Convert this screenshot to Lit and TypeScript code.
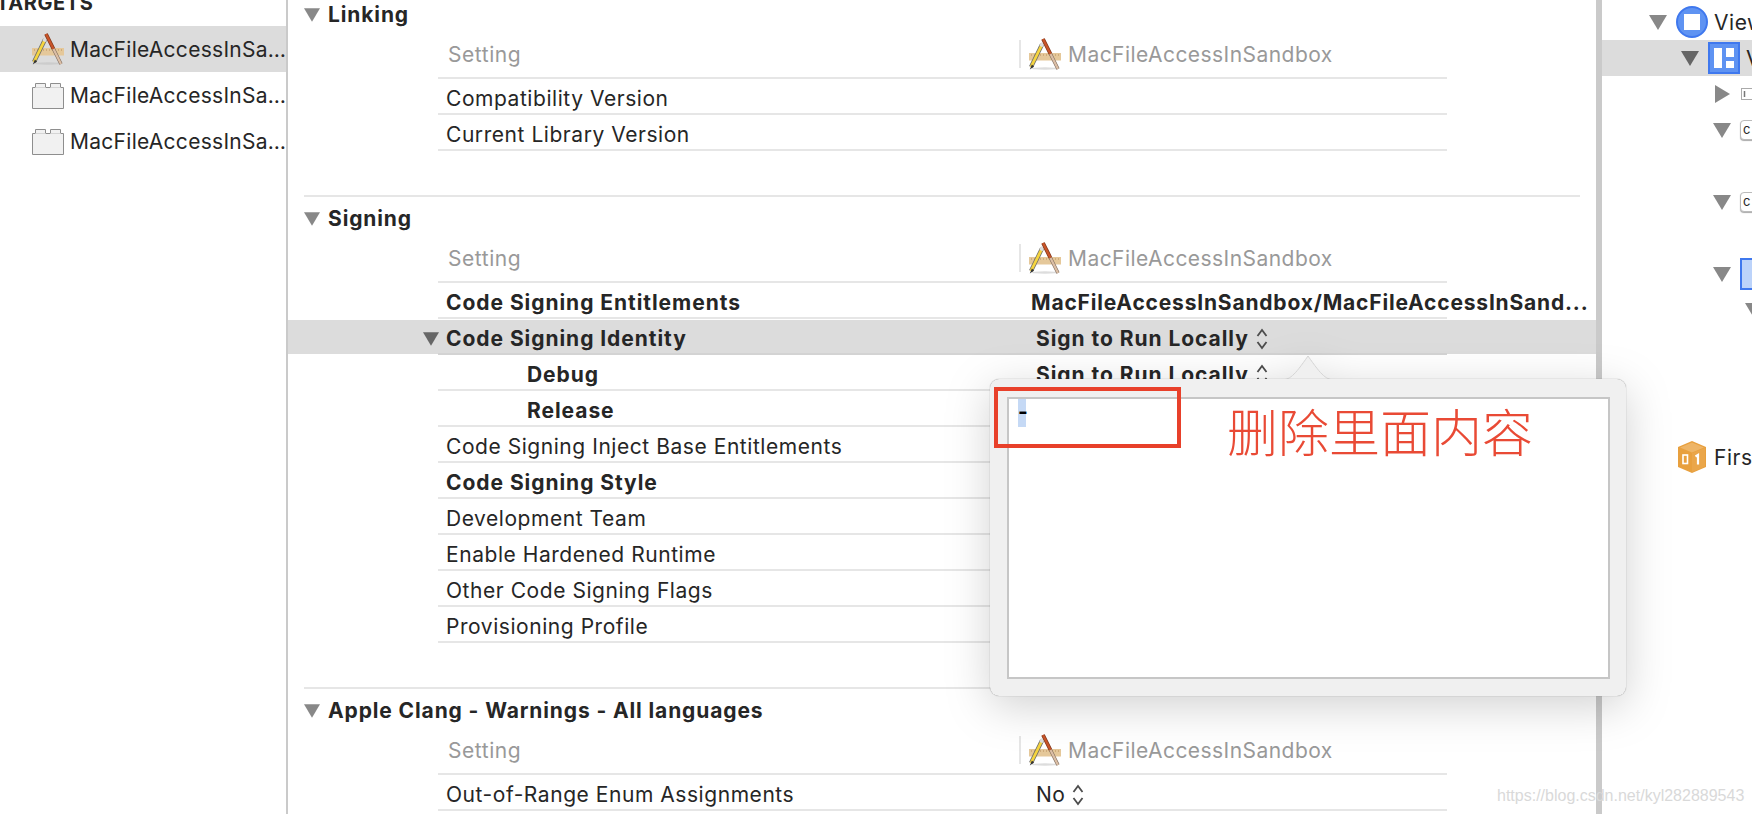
import { LitElement, html, css, nothing } from "lit";
import { customElement } from "lit/decorators.js";

const appIcon = html`<svg class="app" viewBox="0 0 32 32">
  <ellipse cx="16" cy="30.500" rx="14" ry="1.200" fill="#bbb" opacity=".5"/>
  <rect x="0" y="15" width="32" height="7.500" fill="#e5c89a"/>
  <path d="M2 17h28" stroke="#b98f5c" stroke-width="1" stroke-dasharray="1 2"/>
  <path d="M13 6.500 2 29" stroke="#6b6b6b" stroke-width="4.200"/>
  <path d="M13 6.500 2 29" stroke="#f6d53e" stroke-width="2.800"/>
  <path d="M13.600 5 12 8.500" stroke="#ddd" stroke-width="3.200"/>
  <path d="M2.900 26.500 .8 31.500l4.200-3z" fill="#333"/>
  <path d="M14 1 21.500 16" stroke="#7c3418" stroke-width="3.800"/>
  <path d="M14 1 21.500 16" stroke="#c9552a" stroke-width="2.400"/>
  <path d="M21.500 16 29 31" stroke="#7d6a5c" stroke-width="3.400"/>
  <path d="M21.500 16 29 31" stroke="#dcbfa6" stroke-width="2.200"/>
</svg>`;

const brick = html`<svg class="brick" viewBox="0 0 32 27">
  <path d="M.5 26.500V5.500h3V1.500h10v4h5V1.500h10v4h3v21z" fill="#f1f1f1" stroke="#8e8e8e"/>
  <path d="M3.500 5.500h10M18.500 5.500h10" stroke="#d5d5d5"/>
</svg>`;

const stepper = html`<svg class="stepper" viewBox="0 0 14 24"><path d="M2.500 9 7 3l4.500 6M2.500 15 7 21l4.500-6" fill="none" stroke="#4d4d4d" stroke-width="1.800"/></svg>`;

const tri = html`<svg class="tri" viewBox="0 0 18 15"><path d="M0 0h18L9 15z"/></svg>`;
const triR = html`<svg class="tri-right" viewBox="0 0 15 18"><path d="M0 0l15 9L0 18z"/></svg>`;

type Row = { name: string; bold?: boolean; sub?: boolean; open?: boolean; value?: string; stepper?: boolean; cls?: string };
type Section = { title: string; rows: Row[] };

const sections: Section[] = [
  { title: "Linking", rows: [{ name: "Compatibility Version" }, { name: "Current Library Version" }] },
  {
    title: "Signing",
    rows: [
      { name: "Code Signing Entitlements", bold: true, value: "MacFileAccessInSandbox/MacFileAccessInSand...", cls: "ent" },
      { name: "Code Signing Identity", bold: true, open: true, value: "Sign to Run Locally", stepper: true },
      { name: "Debug", bold: true, sub: true, value: "Sign to Run Locally", stepper: true },
      { name: "Release", bold: true, sub: true },
      { name: "Code Signing Inject Base Entitlements" },
      { name: "Code Signing Style", bold: true },
      { name: "Development Team" },
      { name: "Enable Hardened Runtime" },
      { name: "Other Code Signing Flags" },
      { name: "Provisioning Profile" },
    ],
  },
  { title: "Apple Clang - Warnings - All languages", rows: [{ name: "Out-of-Range Enum Assignments", value: "No", stepper: true, cls: "plain" }] },
];

type Node = { indent: number; tri?: "down" | "right"; icon?: string; label?: string; sel?: boolean; gap?: number };
const tree: Node[] = [
  { indent: 47, tri: "down", icon: "circle", label: "View" },
  { indent: 79, tri: "down", icon: "layout", label: "V", sel: true },
  { indent: 113, tri: "right", icon: "field" },
  { indent: 111, tri: "down", icon: "btn" },
  { indent: 0 },
  { indent: 111, tri: "down", icon: "btn" },
  { indent: 0 },
  { indent: 111, tri: "down", icon: "blue" },
  { indent: 143, tri: "down" },
  { indent: 0 }, { indent: 0 }, { indent: 0 },
  { indent: 76, icon: "cube", label: "First", gap: 3 },
];

const treeIcon = (k?: string) => {
  switch (k) {
    case "circle":
      return html`<svg class="ic32" viewBox="0 0 32 32"><circle cx="16" cy="16" r="15" fill="#5f93f2" stroke="#3f78ee" stroke-width="2"/><rect x="8" y="8" width="16" height="16" fill="#fff"/></svg>`;
    case "layout":
      return html`<svg class="ic32" viewBox="0 0 32 32"><rect x="1" y="1" width="30" height="30" fill="#5f93f2" stroke="#3f78ee" stroke-width="2"/><rect x="6" y="6" width="8" height="20" fill="#fff"/><rect x="18" y="6" width="8" height="9" fill="#fff"/><rect x="18" y="19" width="8" height="7" fill="#fff"/></svg>`;
    case "field":
      return html`<svg class="ic-sm" viewBox="0 0 11 12"><rect x=".5" y=".5" width="20" height="11" fill="#fff" stroke="#aaa"/><path d="M3.500 3v6" stroke="#777" stroke-width="1.500"/></svg>`;
    case "btn":
      return html`<span class="btn-ic">c</span>`;
    case "blue":
      return html`<svg class="ic32" viewBox="0 0 32 32"><rect x="1" y="1" width="40" height="30" fill="#bcd3fa" stroke="#3f78ee" stroke-width="2"/></svg>`;
    case "cube":
      return html`<svg class="cube" viewBox="0 0 28 32">
        <path d="M14 0 28 6v20l-14 6L0 26V6z" fill="#e8a03e"/>
        <path d="M14 1.500 26 6.500 14 11.500 2 6.500z" fill="#eeb567"/>
        <path d="M14 12v19L27 25.500V7z" fill="#eaa64a"/>
        <rect x="5" y="14" width="4.500" height="8.500" fill="none" stroke="#fff" stroke-width="1.600"/>
        <path d="M17.500 15.500 20 14v9.500" fill="none" stroke="#fff" stroke-width="2.200"/>
      </svg>`;
    default:
      return nothing;
  }
};

@customElement("app-root")
export class AppRoot extends LitElement {
  static styles = css`
    :host {
      display: block;
      position: relative;
      width: 1752px;
      height: 814px;
      overflow: hidden;
      background: #fff;
      font-family: Inter, "Noto Sans", sans-serif;
      font-size: 21px;
      color: #262626;
      letter-spacing: 0.55px;
    }
    .shell { display: grid; grid-template-columns: 286px 2px 1308px 6px 150px; height: 814px; }
    .bar { background: #cacaca; }
    .side, .main, .tree { overflow: hidden; min-width: 0; }
    .side-h { height: 26px; margin-left: -4px; font-size: 20px; font-weight: 700; line-height: 6px; letter-spacing: 0.6px; }
    .t-row { height: 46px; display: flex; align-items: center; padding-left: 32px; gap: 6px; }
    .t-row.sel { background: #dcdcdc; }
    .t-row span { overflow: hidden; white-space: nowrap; text-overflow: ellipsis; flex: 1; min-width: 0; letter-spacing: 0.28px; }
    svg { display: block; flex: none; }
    .app { width: 32px; height: 32px; }
    .brick { width: 32px; height: 27px; }

    .sections { margin-top: -9px; }
    .section { height: 492px; }
    .section.a { height: 204px; }
    .head { margin: 0 16px; border-top: 2px solid #e6e6e6; height: 42px; display: flex; align-items: center; font-weight: 700; letter-spacing: 0.88px; gap: 8px; padding-top: 3px; box-sizing: border-box; }
    .tri { width: 16px; height: 14px; fill: #888; }
    .cols, .row { display: grid; grid-template-columns: 582px 427px; margin: 0 149px 0 150px; }
    .cols { height: 44px; border-bottom: 2px solid #e6e6e6; color: #999; align-items: center; }
    .cols .s { padding-left: 10px; margin-top: -2px; }
    .cols .p { display: flex; align-items: center; border-left: 2px solid #e6e6e6; height: 28px; padding-left: 8px; gap: 7px; margin-top: -2px; margin-left: -1px; letter-spacing: 0.45px; }
    .row-wrap.hi { background: linear-gradient(#dcdcdc, #dcdcdc) 0 1px / 100% 34px no-repeat; }
    .row { height: 36px; box-sizing: border-box; padding-top: 5px; border-bottom: 2px solid #e6e6e6; align-items: center; }
    .row-wrap.hi .row { border-bottom-color: #d3d3d3; }
    .n { padding-left: 8px; white-space: nowrap; display: flex; align-items: center; }
    .n.sub { padding-left: 89px; }
    .n .tri { fill: #666; margin-left: -23px; margin-right: 7px; }
    .bold { font-weight: 700; letter-spacing: 0.95px; }
    .v { display: flex; align-items: center; gap: 6px; padding-left: 16px; white-space: nowrap; font-weight: 700; letter-spacing: 0.95px; }
    .v.ent { padding-left: 11px; letter-spacing: 0.82px; }
    .v.plain { font-weight: 400; letter-spacing: 0.55px; gap: 5px; }
    .stepper { width: 14px; height: 24px; }

    .node { height: 36px; display: flex; align-items: center; gap: 9px; white-space: nowrap; }
    .node.sel { background: #dcdcdc; }
    .node .tri { width: 18px; height: 15px; }
    .node.sel .tri { fill: #666; }
    .lbl { margin-left: -3px; }
    .cube + .lbl { margin-left: -1px; }
    .tree { padding-top: 4px; }
    .tri-right { width: 15px; height: 18px; fill: #888; }
    .ic32 { width: 32px; height: 32px; }
    .ic-sm { width: 11px; height: 12px; margin-left: 2px; }
    .btn-ic { display: block; width: 20px; height: 20px; box-sizing: border-box; border: 1px solid #bbb; border-radius: 4px; background: #fff; font-size: 13px; line-height: 16px; padding-left: 2px; box-shadow: 0 1px 1px #aaa; flex: none; }
    .cube { width: 28px; height: 32px; }

    .pop { position: absolute; left: 990px; top: 356px; width: 636px; height: 340px; filter: drop-shadow(0 10px 22px rgba(0,0,0,.18)); }
    .arrow { position: absolute; left: 290px; top: 0; width: 56px; height: 24px; overflow: visible; }
    .pop-body { position: absolute; left: 0; right: 0; top: 23px; bottom: 0; background: #f0f0f0; border-radius: 9px; padding: 18px 16px 17px 17px; box-sizing: border-box; display: flex; box-shadow: 0 0 1px rgba(0,0,0,.5); }
    .area { flex: 1; background: #fff; border: 2px solid #c6c6c6; box-sizing: border-box; padding: 0 9px; color: #000; font-weight: 700; }
    .area span { display: block; background: #c5d9f5; width: 8px; height: 28px; line-height: 25px; text-align: center; letter-spacing: 0; }
    .mark { position: absolute; left: 3.500px; top: 31px; width: 187px; height: 61px; box-sizing: border-box; border: 4px solid #e8402a; }
    .note { position: absolute; left: 237px; top: 39px; font-family: "Noto Sans CJK SC", sans-serif; font-size: 51px; font-weight: 300; line-height: 70px; color: #e94a35; white-space: nowrap; letter-spacing: 0; }
    .wm { position: absolute; left: 1497px; top: 786px; font-family: "Liberation Sans", sans-serif; font-size: 16px; letter-spacing: 0; line-height: 20px; color: #d9d9d9; white-space: nowrap; }
  `;

  private row(r: Row) {
    return html`<div class="row-wrap ${r.open ? "hi" : ""}"><div class="row">
      <div class="n ${r.sub ? "sub" : ""} ${r.bold ? "bold" : ""}">${r.open ? tri : nothing}${r.name}</div>
      ${r.value ? html`<div class="v ${r.cls ?? ""}">${r.value}${r.stepper ? stepper : nothing}</div>` : nothing}
    </div></div>`;
  }

  render() {
    return html`
      <div class="shell">
        <div class="side">
          <div class="side-h">TARGETS</div>
          <div class="t-row sel">${appIcon}<span>MacFileAccessInSandbox</span></div>
          <div class="t-row">${brick}<span>MacFileAccessInSandbox</span></div>
          <div class="t-row">${brick}<span>MacFileAccessInSandbox</span></div>
        </div>
        <div class="bar"></div>
        <div class="main">
          <div class="sections">
            ${sections.map((s, i) => html`<section class="section ${i === 0 ? "a" : ""}">
              <div class="head">${tri}${s.title}</div>
              <div class="cols"><div class="s">Setting</div><div class="p">${appIcon}MacFileAccessInSandbox</div></div>
              ${s.rows.map((r) => this.row(r))}
            </section>`)}
          </div>
        </div>
        <div class="bar"></div>
        <div class="tree">
          ${tree.map((n) => html`<div class="node ${n.sel ? "sel" : ""}" style="padding-left:${n.indent}px;margin-top:${n.gap ?? 0}px">
            ${n.tri === "down" ? tri : n.tri === "right" ? triR : nothing}
            ${treeIcon(n.icon)}${n.label ? html`<span class="lbl">${n.label}</span>` : nothing}
          </div>`)}
        </div>
      </div>
      <div class="pop">
        <svg class="arrow" viewBox="0 0 56 24"><path d="M0 24C10 24 14 20 28 0 42 20 46 24 56 24" fill="#f0f0f0" stroke="#d4d4d4" stroke-width="1"/></svg>
        <div class="pop-body"><div class="area"><span>-</span></div></div>
        <div class="mark"></div>
        <div class="note">删除里面内容</div>
      </div>
      <div class="wm">https://blog.csdn.net/kyl282889543</div>
    `;
  }
}
